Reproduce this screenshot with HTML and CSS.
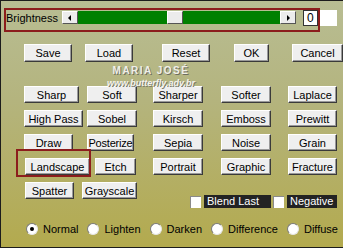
FILE: index.html
```html
<!DOCTYPE html>
<html lang="en">
<head>
    <meta charset="UTF-8">
    <title>Photo Tools</title>
    <link rel="stylesheet" href="styles.css">
</head>
<body>
    <div class="dialog">

        <!-- Brightness slider -->
        <div class="bright-row">
            <span class="bright-label">Brightness</span>
            <div class="slider">
                <span class="arrow arrow-left"></span>
                <div class="track"><span class="thumb"></span></div>
                <span class="arrow arrow-right"></span>
            </div>
            <div class="value"><span class="value-field">0</span></div>
        </div>

        <!-- Save / Load / Reset / OK / Cancel -->
        <div class="actions">
            <button class="btn btn-save">Save</button>
            <button class="btn btn-load">Load</button>
            <button class="btn btn-reset">Reset</button>
            <button class="btn btn-ok">OK</button>
            <button class="btn btn-cancel">Cancel</button>
        </div>

        <!-- Filters -->
        <div class="filters">
            <button class="btn w55">Sharp</button>
            <button class="btn w50">Soft</button>
            <button class="btn w50">Sharper</button>
            <button class="btn w50">Softer</button>
            <button class="btn w49">Laplace</button>

            <button class="btn w59">High Pass</button>
            <button class="btn w50">Sobel</button>
            <button class="btn w50">Kirsch</button>
            <button class="btn w50">Emboss</button>
            <button class="btn w49">Prewitt</button>

            <button class="btn w49">Draw</button>
            <button class="btn w47 tight">Posterize</button>
            <button class="btn w50">Sepia</button>
            <button class="btn w50">Noise</button>
            <button class="btn w49">Grain</button>

            <button class="btn w65 nudge">Landscape</button>
            <button class="btn w41 etch">Etch</button>
            <button class="btn w50">Portrait</button>
            <button class="btn w50">Graphic</button>
            <button class="btn w49">Fracture</button>

            <button class="btn w49 nudge">Spatter</button>
            <button class="btn w55 gray">Grayscale</button>

            <div class="checks">
                <span class="checkbox"></span>
                <span class="check-label blend">Blend Last</span>
                <span class="checkbox"></span>
                <span class="check-label negative">Negative</span>
            </div>
        </div>

        <!-- Blend modes -->
        <div class="modes">
            <label class="mode"><span class="radio checked"></span>Normal</label>
            <label class="mode"><span class="radio"></span>Lighten</label>
            <label class="mode"><span class="radio"></span>Darken</label>
            <label class="mode"><span class="radio"></span>Difference</label>
            <label class="mode"><span class="radio"></span>Diffuse</label>
        </div>

        <!-- Watermark and highlight marks over the dialog -->
        <div class="watermark">
            <div class="wm-name">MARIA JOSÉ</div>
            <div class="wm-site">www.butterfly.adv.br</div>
        </div>
        <div class="mark mark-bright"></div>
        <div class="mark mark-land"></div>
    </div>
</body>
</html>
```

FILE: styles.css
```css
* {
    box-sizing: border-box;
}

body {
    margin: 0;
    font-family: "Liberation Sans", Arial, sans-serif;
    font-size: 11px;
    color: #000;
}

.dialog {
    position: relative;
    width: 343px;
    height: 248px;
    border-top: 1px solid #1c1c1c;
    border-left: 1px solid #1c1c1c;
    border-bottom: 1px solid #1c1c1c;
    background: linear-gradient(#b8bd93 0%, #b4b47e 40%, #b3aa4e 100%);
    overflow: hidden;
}

/* Brightness */
.bright-row {
    display: flex;
    align-items: center;
    height: 17px;
    margin: 8px 0 0 5px;
}

.bright-label {
    width: 56px;
    font-size: 11px;
}

.slider {
    display: flex;
    width: 234px;
    height: 13px;
}

.arrow {
    position: relative;
    width: 16px;
    height: 13px;
    background: #ececec;
    border-top: 1px solid #fff;
    border-left: 1px solid #fff;
    border-right: 1px solid #555;
    border-bottom: 1px solid #555;
}

.arrow::after {
    content: "";
    position: absolute;
    top: 3px;
    width: 0;
    height: 0;
    border-top: 3px solid transparent;
    border-bottom: 3px solid transparent;
}

.arrow-left::after {
    left: 5px;
    border-right: 3px solid #000;
}

.arrow-right::after {
    left: 6px;
    border-left: 3px solid #000;
}

.track {
    flex: 1;
    display: flex;
    justify-content: center;
    background: #008000;
}

.thumb {
    width: 16px;
    height: 13px;
    margin-left: -8px;
    background: #ececec;
    border-top: 1px solid #fff;
    border-left: 1px solid #fff;
    border-right: 1px solid #555;
    border-bottom: 1px solid #555;
}

.value {
    width: 34px;
    height: 16px;
    margin-left: 7px;
    background: #fff;
}

.value-field {
    display: block;
    width: 15px;
    height: 16px;
    padding-left: 3px;
    border: 1px solid #333;
    font-size: 12px;
    line-height: 14px;
}

/* Buttons */
.btn {
    height: 18px;
    padding: 0;
    font-family: "Liberation Sans", Arial, sans-serif;
    font-size: 11px;
    line-height: 15px;
    color: #000;
    background: #efefef;
    border-top: 1px solid #fff;
    border-left: 1px solid #fff;
    border-right: 1px solid #3a3a3a;
    border-bottom: 1px solid #3a3a3a;
    box-shadow: inset -1px -1px 0 #9a9a9a;
    text-align: center;
}

.actions {
    display: flex;
    margin: 18px 0 0 23px;
}

.btn-save { width: 48px; }
.btn-load { width: 48px; margin-left: 13px; }
.btn-reset { width: 48px; margin-left: 29px; }
.btn-ok { width: 35px; margin-left: 24px; }
.btn-cancel { width: 51px; margin-left: 23px; }

.filters {
    display: grid;
    grid-template-columns: 63px 66px 68px 67px 50px;
    grid-auto-rows: 17px;
    row-gap: 7px;
    margin: 24px 0 0 23px;
}

.filters .btn {
    height: 17px;
    line-height: 14px;
}

.w41 { width: 41px; }
.w47 { width: 47px; }
.w49 { width: 49px; }
.w50 { width: 50px; }
.w55 { width: 55px; }
.w59 { width: 59px; }
.w65 { width: 65px; }

.nudge { margin-left: 1px; }
.etch { margin-left: 8px; }
.gray { margin-left: -5px; }
.tight { letter-spacing: -0.2px; }

/* Checkboxes */
.checks {
    grid-column: 3 / 6;
    display: flex;
    align-items: center;
    height: 13px;
    margin: 13px 0 0 37px;
}

.checkbox {
    width: 11px;
    height: 12px;
    background: #fff;
    border-top: 1px solid #8a8a8a;
    border-left: 1px solid #8a8a8a;
}

.check-label {
    height: 13px;
    padding-left: 3px;
    background: #232323;
    color: #fff;
    line-height: 13px;
}

.blend {
    width: 67px;
    margin: 0 2px 0 3px;
}

.negative {
    width: 50px;
    margin-left: 3px;
}

/* Blend modes */
.modes {
    display: flex;
    align-items: center;
    height: 14px;
    margin: 23px 0 0 25px;
    gap: 9px;
}

.mode {
    display: flex;
    align-items: center;
    font-size: 11px;
}

.radio {
    position: relative;
    width: 12px;
    height: 12px;
    margin-right: 5px;
    border-radius: 50%;
    background: #fff;
    border-top: 1px solid #7a7a7a;
    border-left: 1px solid #7a7a7a;
    border-right: 1px solid #e6e6e6;
    border-bottom: 1px solid #e6e6e6;
}

.radio.checked::after {
    content: "";
    position: absolute;
    top: 3px;
    left: 3px;
    width: 4px;
    height: 4px;
    border-radius: 50%;
    background: #000;
}

/* Watermark */
.watermark {
    position: absolute;
    top: 64px;
    left: 100px;
    width: 100px;
    text-align: center;
    pointer-events: none;
}

.wm-name {
    font-size: 10px;
    font-weight: bold;
    letter-spacing: 1.5px;
    color: #efefe8;
    text-shadow: 1px 1px 0 #6e6e60;
}

.wm-site {
    margin-top: 2px;
    font-size: 9px;
    font-weight: bold;
    font-style: italic;
    color: #f4f4ee;
    text-shadow: 1px 1px 0 #7a7a6a;
}

/* Highlight marks */
.mark {
    position: absolute;
    border: 2px solid #8c1d1d;
}

.mark-bright {
    top: 7px;
    left: 3px;
    width: 316px;
    height: 24px;
}

.mark-land {
    top: 148px;
    left: 15px;
    width: 75px;
    height: 28px;
}
```
